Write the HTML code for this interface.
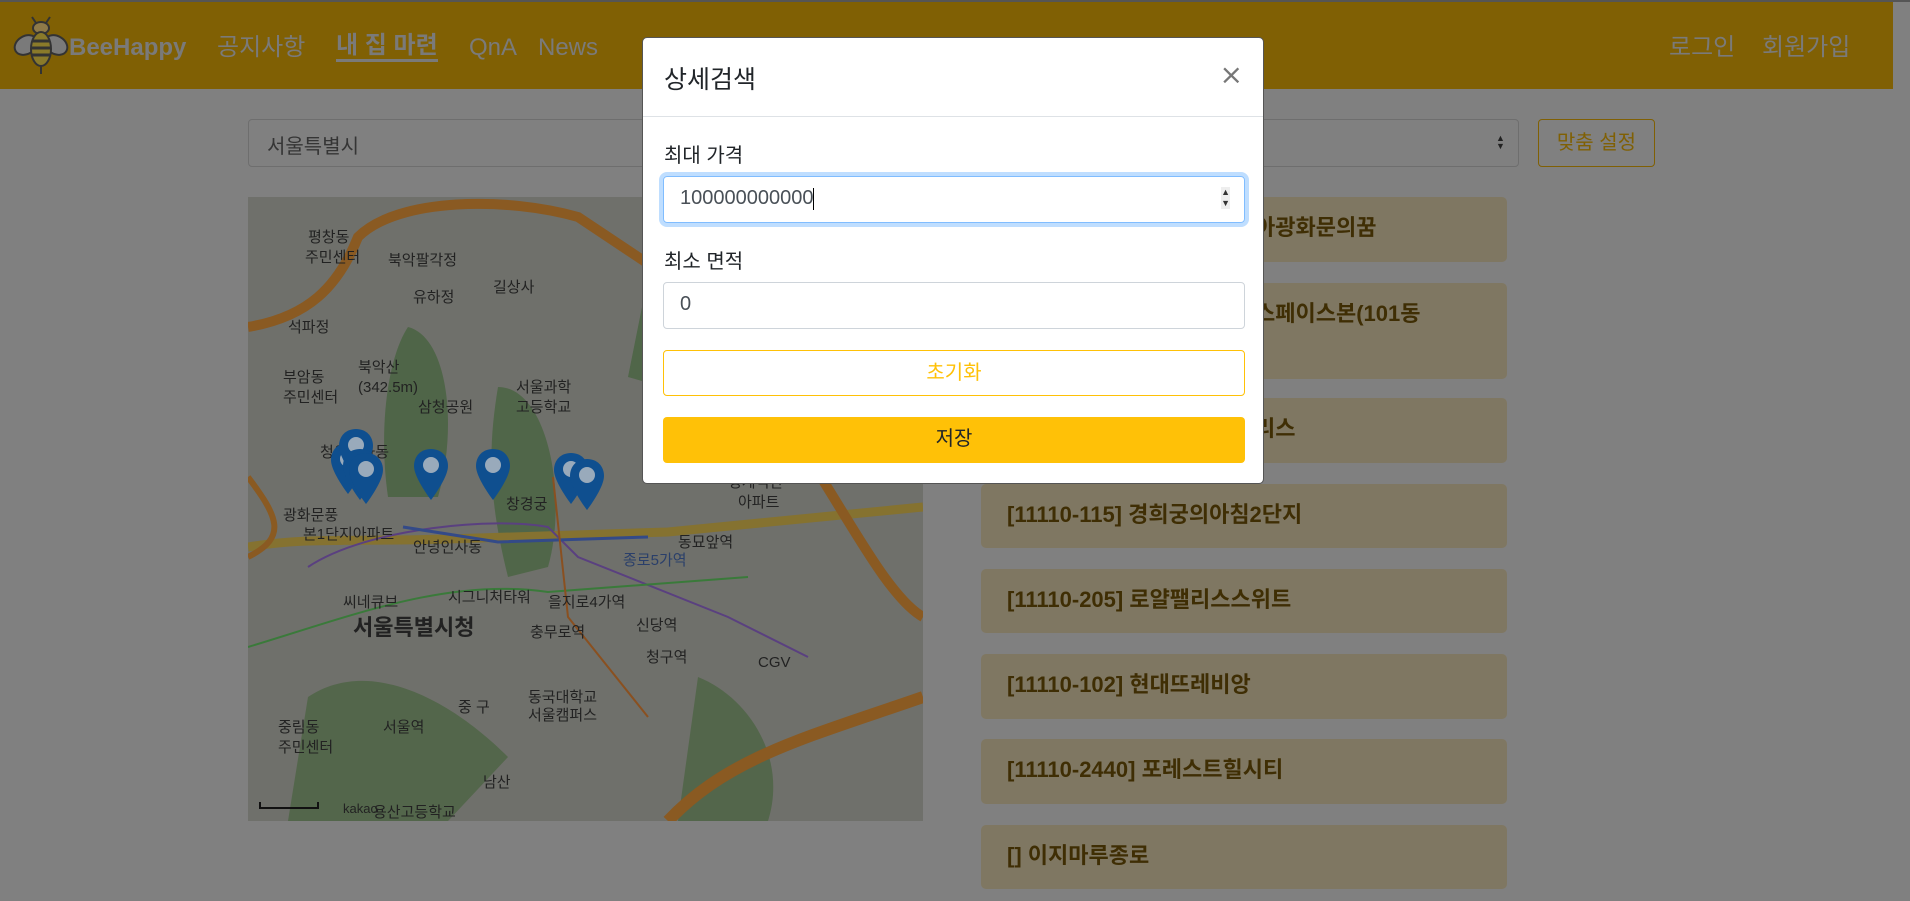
<!DOCTYPE html>
<html lang="ko"><head><meta charset="utf-8">
<style>
*{box-sizing:border-box;margin:0;padding:0}
body{width:1910px;height:901px;overflow:hidden;background:#808080;font-family:"Liberation Sans","Noto Sans CJK KR",sans-serif;position:relative}
.topline{position:absolute;left:0;top:0;width:1910px;height:2px;background:#555}
.nav{position:absolute;left:0;top:2px;width:1893px;height:87px;background:#806004}
.nav span{position:absolute;top:31px;font-size:24px;color:#7a7a7a;line-height:30px}
.brand{font-weight:bold;font-size:24px}
.sel{position:absolute;left:248px;top:119px;width:1271px;height:48px;border:1px solid #6e6e6e;border-radius:4px;background:#808080;font-size:20px;color:#353535;padding:10px 18px}
.btn2{position:absolute;left:1538px;top:119px;width:117px;height:48px;border:1px solid #806004;border-radius:4px;color:#806004;font-size:20px;text-align:center;line-height:46px}
.map{position:absolute;left:248px;top:197px;width:675px;height:624px;background:#6f706b;overflow:hidden}
.item{position:absolute;left:981px;width:526px;background:#7f7762;border-radius:5px;color:#3f2e04;font-weight:bold;font-size:22px;padding:16px 26px;line-height:30px}
.modal{position:absolute;left:642px;top:37px;width:622px;height:447px;background:#fff;border-radius:5px;border:1px solid #555}
.mh{height:79px;border-bottom:1px solid #dee2e6;position:relative}
.mh .t{position:absolute;left:21px;top:22px;font-size:25px;color:#212529}
.mh .x{position:absolute;right:20px;top:20px;font-size:28px;color:#777;font-family:"DejaVu Sans",sans-serif}
.lbl{position:absolute;left:21px;font-size:20px;color:#212529}
.inp{position:absolute;left:20px;width:582px;height:47px;border:1px solid #ced4da;border-radius:4px;font-size:20px;color:#495057;padding:10px 16px}
.b{position:absolute;left:20px;width:582px;height:46px;border-radius:4px;font-size:20px;text-align:center;line-height:44px}
</style></head><body>
<div class="topline"></div>
<div class="nav">
<svg style="position:absolute;left:12px;top:13px" width="58" height="60" viewBox="0 0 58 60">
<path d="M24 8 L20 2 M34 8 L38 2" stroke="#333" stroke-width="2" fill="none"/>
<ellipse cx="14" cy="30" rx="12" ry="9" fill="#7a7a7a" stroke="#333" stroke-width="2" transform="rotate(-30 14 30)"/>
<ellipse cx="44" cy="30" rx="12" ry="9" fill="#7a7a7a" stroke="#333" stroke-width="2" transform="rotate(30 44 30)"/>
<ellipse cx="29" cy="13" rx="8" ry="6" fill="#8f7a48" stroke="#333" stroke-width="2"/>
<ellipse cx="29" cy="34" rx="10" ry="17" fill="#8a7a2a" stroke="#333" stroke-width="2"/>
<path d="M20 26h18M19 33h20M20 40h18" stroke="#333" stroke-width="3"/>
<path d="M29 51v8" stroke="#333" stroke-width="2"/>
</svg>
<span class="brand" style="left:69px">BeeHappy</span>
<span style="left:217px">공지사항</span>
<span style="left:336px;font-weight:bold;border-bottom:3px solid #7a7a7a;line-height:26px">내 집 마련</span>
<span style="left:469px">QnA</span>
<span style="left:538px">News</span>
<span style="left:1669px">로그인</span>
<span style="left:1762px">회원가입</span>
</div>
<div class="sel">서울특별시</div>
<div style="position:absolute;left:1496px;top:134px;font-size:9px;line-height:8px;color:#222">▲<br>▼</div>
<div class="btn2">맞춤 설정</div>
<div class="map">
<svg width="675" height="624" viewBox="0 0 675 624">
<defs><g id="p"><path d="M0 0c-10 0-17 7-17 17 0 12 17 34 17 34s17-22 17-34c0-10-7-17-17-17z" fill="#0f4f8f"/><circle cx="0" cy="16" r="8" fill="#9ab"/></g></defs>
<path d="M160 130 C200 140 210 230 190 300 L140 300 C130 230 140 160 160 130Z" fill="#4f6548"/>
<path d="M250 190 C300 190 320 300 300 370 L260 380 C240 300 240 250 250 190Z" fill="#506649"/>
<path d="M400 80 C450 70 470 130 450 200 L380 180Z" fill="#506649"/>
<path d="M60 500 C120 460 200 500 260 560 L200 624 L40 624Z" fill="#53664b"/>
<path d="M450 480 C500 500 540 560 520 624 L430 624Z" fill="#53664b"/>
<path d="M0 130 C60 120 90 90 110 40 C150 0 260 0 330 20 L420 80" stroke="#8a5a22" stroke-width="10" fill="none"/>
<path d="M0 350 C60 340 100 345 200 342 L420 335 L675 310" stroke="#857230" stroke-width="9" fill="none"/>
<path d="M0 280 C30 320 40 340 0 360" stroke="#8a5a22" stroke-width="6" fill="none"/>
<path d="M560 260 C600 320 640 400 675 420" stroke="#8a5a22" stroke-width="10" fill="none"/>
<path d="M420 624 C480 560 560 540 675 500" stroke="#8a5a22" stroke-width="12" fill="none"/>
<path d="M60 370 C120 330 250 320 300 330 L330 360 L480 420 L560 460" stroke="#5a4080" stroke-width="2" fill="none"/>
<path d="M0 450 C100 420 200 380 300 395 L500 380" stroke="#3a7a3a" stroke-width="2" fill="none"/>
<path d="M155 330 L250 345 L400 340" stroke="#334a88" stroke-width="3" fill="none"/>
<path d="M305 280 L320 420 L400 520" stroke="#8a5020" stroke-width="2" fill="none"/>
<g fill="#222" font-size="15" font-family="Liberation Sans,Noto Sans CJK KR,sans-serif">
<text x="60" y="45">평창동</text><text x="57" y="65">주민센터</text><text x="140" y="68">북악팔각정</text>
<text x="165" y="105">유하정</text><text x="245" y="95">길상사</text><text x="40" y="135">석파정</text>
<text x="110" y="175">북악산</text><text x="110" y="195">(342.5m)</text><text x="35" y="185">부암동</text>
<text x="35" y="205">주민센터</text><text x="170" y="215">삼청공원</text><text x="268" y="195">서울과학</text>
<text x="268" y="215">고등학교</text><text x="72" y="260">청운효자동</text><text x="35" y="323">광화문풍</text>
<text x="55" y="342">본1단지아파트</text><text x="165" y="355">안녕인사동</text><text x="258" y="312">창경궁</text>
<text x="95" y="410">씨네큐브</text><text x="200" y="405">시그니처타워</text><text x="300" y="410">을지로4가역</text>
<text x="282" y="440">충무로역</text><text x="388" y="433">신당역</text><text x="398" y="465">청구역</text>
<text x="510" y="470">CGV</text><text x="280" y="505">동국대학교</text><text x="280" y="523">서울캠퍼스</text>
<text x="210" y="515">중 구</text><text x="135" y="535">서울역</text><text x="30" y="535">중림동</text>
<text x="30" y="555">주민센터</text><text x="235" y="590">남산</text><text x="125" y="620">용산고등학교</text>
<text x="480" y="290">청계벽산</text><text x="490" y="310">아파트</text><text x="430" y="350">동묘앞역</text>
<text x="375" y="368" fill="#2a3f6a">종로5가역</text>
<text x="105" y="438" font-size="22" font-weight="bold">서울특별시청</text>
<text x="95" y="616" font-size="13">kakao</text>
</g>
<path d="M12 605v6h58v-6" stroke="#111" stroke-width="2" fill="none"/>
<use href="#p" x="100" y="246"/><use href="#p" x="108" y="232"/><use href="#p" x="112" y="252"/><use href="#p" x="118" y="256"/>
<use href="#p" x="183" y="252"/><use href="#p" x="245" y="252"/><use href="#p" x="323" y="256"/><use href="#p" x="339" y="262"/>
</svg>
</div>
<div class="item" style="top:197px;height:65px;padding-left:274px">아광화문의꿈</div>
<div class="item" style="top:283px;height:96px;padding-left:274px">스페이스본(101동</div>
<div class="item" style="top:398px;height:65px;padding-left:274px">리스</div>
<div class="item" style="top:484px;height:64px">[11110-115] 경희궁의아침2단지</div>
<div class="item" style="top:569px;height:64px">[11110-205] 로얄팰리스스위트</div>
<div class="item" style="top:654px;height:65px">[11110-102] 현대뜨레비앙</div>
<div class="item" style="top:739px;height:65px">[11110-2440] 포레스트힐시티</div>
<div class="item" style="top:825px;height:64px">[] 이지마루종로</div>
<div class="modal">
<div class="mh"><span class="t">상세검색</span><span class="x">×</span></div>
<div class="lbl" style="top:101px">최대 가격</div>
<div class="inp" style="top:138px;border-color:#80bdff;box-shadow:0 0 0 4px #bfdeff">100000000000<span style="display:inline-block;width:1px;height:22px;background:#000;vertical-align:middle"></span><span style="position:absolute;right:14px;top:10px;font-size:9px;line-height:11px;color:#333;background:#eee">▲<br>▼</span></div>
<div class="lbl" style="top:207px">최소 면적</div>
<div class="inp" style="top:244px">0</div>
<div class="b" style="top:312px;border:1px solid #ffc107;color:#ffc107">초기화</div>
<div class="b" style="top:379px;background:#ffc107;color:#212529">저장</div>
</div>
</body></html>
